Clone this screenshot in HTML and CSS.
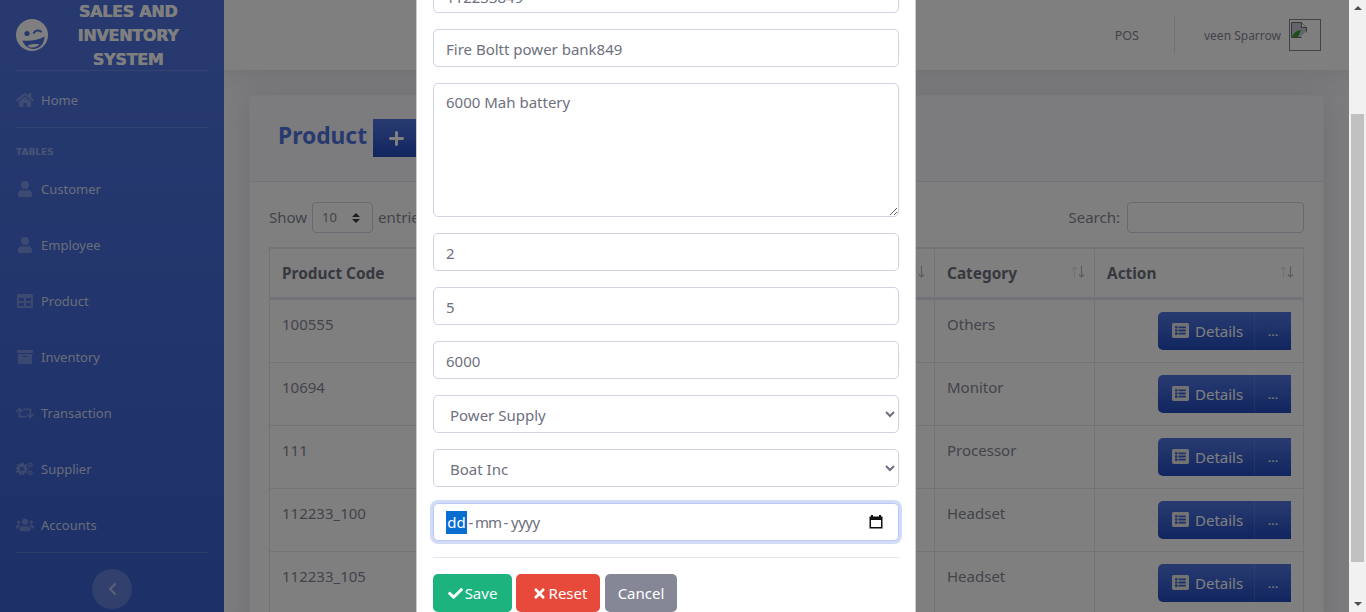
FILE: index.html
```html
<!DOCTYPE html>
<html lang="en">
<head>
    <meta charset="UTF-8">
    <meta name="viewport" content="width=device-width, initial-scale=1.0">
    <title>Product</title>
    <link rel="stylesheet" href="styles.css">
</head>
<body>
    <div id="page">
        <aside id="sidebar">
            <div class="brand">
                <svg class="brand-icon" viewBox="0 0 32 32">
                    <circle cx="16" cy="16" r="16" fill="currentColor"/>
                    <circle cx="11" cy="14.500" r="2.600" fill="#4e73df"/>
                    <path d="M17.500 14.500c1.500-3.500 5.500-4 8-1.500" fill="none" stroke="#4e73df" stroke-width="2"/>
                    <path d="M6.500 21.500c6.500 1 15.500 0 22-4 0 7-4.500 12-10.500 12.500-5.500.4-10-3.500-11.500-8.500z" fill="#4e73df"/>
                    <path d="M11.500 27c3-2 8-2.500 12-1.500-3.500 3.500-8.500 4-12 1.500z" fill="currentColor"/>
                </svg>
                <div class="brand-text">SALES AND INVENTORY SYSTEM</div>
            </div>
            <hr class="side-line">
            <a class="nav-home">
                <svg class="nav-icon" viewBox="0 0 576 512"><path fill="currentColor" d="M280 148 96 300v164c0 9 7 16 16 16l112-.3c9 0 16-7 16-16V368c0-9 7-16 16-16h64c9 0 16 7 16 16v95.600c0 9 7 16 16 16l112 .4c9 0 16-7 16-16V300L296 148c-4-4-12-4-16 0zM572 251l-84-69V44c0-7-5-12-12-12h-56c-7 0-12 5-12 12v72l-90-74c-18-15-43-15-61 0L4 251c-5 4-6 12-2 17l26 31c4 5 12 6 17 2L280 107c4-4 12-4 16 0l235 194c5 4 13 3 17-2l26-31c4-5 3-13-2-17z"/></svg>
                Home
            </a>
            <hr class="side-line">
            <div class="side-head">TABLES</div>
            <a class="nav-item">
                <svg class="nav-icon" viewBox="0 0 448 512"><path fill="currentColor" d="M224 256a128 128 0 1 0 0-256 128 128 0 0 0 0 256zm90 32h-17a174 174 0 0 1-146 0h-17C60 288 0 348 0 422v42c0 26 22 48 48 48h352c26 0 48-22 48-48v-42c0-74-60-134-134-134z"/></svg>
                Customer
            </a>
            <a class="nav-item">
                <svg class="nav-icon" viewBox="0 0 448 512"><path fill="currentColor" d="M224 256a128 128 0 1 0 0-256 128 128 0 0 0 0 256zm90 32h-17a174 174 0 0 1-146 0h-17C60 288 0 348 0 422v42c0 26 22 48 48 48h352c26 0 48-22 48-48v-42c0-74-60-134-134-134z"/></svg>
                Employee
            </a>
            <a class="nav-item">
                <svg class="nav-icon" viewBox="0 0 512 512"><path fill="currentColor" d="M464 32H48C21 32 0 53 0 80v352c0 27 21 48 48 48h416c27 0 48-21 48-48V80c0-27-21-48-48-48zM224 416H64v-96h160v96zm0-160H64v-96h160v96zm224 160H288v-96h160v96zm0-160H288v-96h160v96z"/></svg>
                Product
            </a>
            <a class="nav-item">
                <svg class="nav-icon" viewBox="0 0 512 512"><path fill="currentColor" d="M32 448c0 18 14 32 32 32h384c18 0 32-14 32-32V160H32v288zm160-212c0-7 5-12 12-12h104c7 0 12 5 12 12v8c0 7-5 12-12 12H204c-7 0-12-5-12-12v-8zM480 32H32C14 32 0 46 0 64v48c0 9 7 16 16 16h480c9 0 16-7 16-16V64c0-18-14-32-32-32z"/></svg>
                Inventory
            </a>
            <a class="nav-item">
                <svg class="nav-icon" viewBox="0 0 640 512"><path fill="currentColor" d="M629.657 343.598L528.971 444.284c-9.373 9.372-24.568 9.372-33.941 0L394.343 343.598c-9.373-9.373-9.373-24.569 0-33.941l10.823-10.823c9.562-9.562 25.133-9.34 34.419.492L480 342.118V160H292.451a24.005 24.005 0 0 1-16.971-7.029l-16-16C244.361 121.851 255.069 96 276.451 96H520c13.255 0 24 10.745 24 24v222.118l40.416-42.792c9.285-9.831 24.856-10.054 34.419-.492l10.823 10.823c9.372 9.372 9.372 24.569-.001 33.941zm-265.138 15.431A23.999 23.999 0 0 0 347.548 352H160V169.881l40.416 42.792c9.286 9.831 24.856 10.054 34.419.491l10.822-10.822c9.373-9.373 9.373-24.569 0-33.941L144.971 67.716c-9.373-9.373-24.569-9.373-33.941 0L10.343 168.402c-9.373 9.373-9.373 24.569 0 33.941l10.822 10.822c9.562 9.562 25.133 9.34 34.419-.491L96 169.881V392c0 13.255 10.745 24 24 24h243.549c21.382 0 32.09-25.851 16.971-40.971l-16.001-16z"/></svg>
                Transaction
            </a>
            <a class="nav-item">
                <svg class="nav-icon" viewBox="0 0 640 512">
                    <circle cx="210" cy="256" r="125" fill="none" stroke="currentColor" stroke-width="110"/>
                    <path fill="none" stroke="currentColor" stroke-width="70" stroke-dasharray="70 59" d="M210 60a196 196 0 1 1-.1 0z"/>
                    <circle cx="510" cy="110" r="62" fill="none" stroke="currentColor" stroke-width="50"/>
                    <circle cx="510" cy="400" r="62" fill="none" stroke="currentColor" stroke-width="50"/>
                </svg>
                Supplier
            </a>
            <a class="nav-item">
                <svg class="nav-icon" viewBox="0 0 640 512"><path fill="currentColor" d="M96 224a64 64 0 1 0 0-128 64 64 0 0 0 0 128zm448 0a64 64 0 1 0 0-128 64 64 0 0 0 0 128zm32 32h-64c-18 0-34 7-45 19 40 22 69 62 75 109h66c18 0 32-14 32-32v-32c0-35-29-64-64-64zm-256 0a112 112 0 1 0 0-224 112 112 0 0 0 0 224zm77 32h-8a155 155 0 0 1-138 0h-8C179 288 128 340 128 403v29c0 27 21 48 48 48h288c27 0 48-21 48-48v-29c0-63-51-115-115-115zm-224-13c-11-12-27-19-45-19H64c-35 0-64 29-64 64v32c0 18 14 32 32 32h66c6-47 35-87 75-109z"/></svg>
                Accounts
            </a>
            <hr class="side-line">
            <div class="toggle-wrap">
                <div class="side-toggle">
                    <svg viewBox="0 0 320 512"><path fill="currentColor" d="M34 239 228 45c9-9 24-9 34 0l22 23c9 9 9 24 0 34L130 256l154 154c9 10 9 25 0 34l-22 23c-10 9-25 9-34 0L34 273c-10-9-10-25 0-34z"/></svg>
                </div>
            </div>
        </aside>

        <div id="main">
            <header id="topbar">
                <span class="top-link">POS</span>
                <span class="top-rule"></span>
                <span class="top-name">veen Sparrow</span>
                <span class="avatar">
                    <svg viewBox="0 0 16 16" width="16" height="16">
                        <path d="M.5.5h10l5 5v5l-5 5H.5z" fill="#c6cad6" stroke="#6e6e6e"/>
                        <path d="M10.500.5v5h5" fill="#fff" stroke="#6e6e6e"/>
                        <path d="M1 15c1.500-4 5-7 9-7l-3 7z" fill="#3c9a35"/>
                        <path d="M9 15l6.500-6v6z" fill="#fff"/>
                    </svg>
                </span>
            </header>
            <div id="content">
                <section class="card">
                    <div class="card-head">
                        <h4 class="card-title">Product</h4>
                        <span class="add-btn"><svg viewBox="0 0 15 15" width="15" height="15"><path fill="#fff" d="M6 1.500C6 .7 6.700 0 7.500 0S9 .7 9 1.500V6h4.500c.8 0 1.500.7 1.500 1.500S14.300 9 13.500 9H9v4.500c0 .8-.7 1.500-1.500 1.500S6 14.300 6 13.500V9H1.500C.7 9 0 8.300 0 7.500S.7 6 1.500 6H6z"/></svg></span>
                    </div>
                    <div class="card-body">
                        <div class="table-tools">
                            <div class="show-box">Show <span class="len-select">10 <svg class="len-arrows" viewBox="0 0 8 10"><path fill="#3a3a3a" d="M0 4 4 0l4 4zM0 6h8l-4 4z"/></svg></span> entries</div>
                            <div class="search-box">Search: <span class="search-input"></span></div>
                        </div>
                        <table id="products">
                            <thead>
                                <tr>
                                    <th class="col-code">Product Code</th>
                                    <th class="col-name">Name<svg class="sort" viewBox="0 0 14 12"><path class="sort-up" d="M3.500 12V1M1 3.500 3.500 1 6 3.500"/><path class="sort-down" d="M10.500 0v11M8 8.500l2.500 2.500L13 8.500"/></svg></th>
                                    <th class="col-cat">Category<svg class="sort" viewBox="0 0 14 12"><path class="sort-up" d="M3.500 12V1M1 3.500 3.500 1 6 3.500"/><path class="sort-down" d="M10.500 0v11M8 8.500l2.500 2.500L13 8.500"/></svg></th>
                                    <th class="col-act">Action<svg class="sort" viewBox="0 0 14 12"><path class="sort-up" d="M3.500 12V1M1 3.500 3.500 1 6 3.500"/><path class="sort-down" d="M10.500 0v11M8 8.500l2.500 2.500L13 8.500"/></svg></th>
                                </tr>
                            </thead>
                            <tbody>
                                <tr>
                                    <td>100555</td><td></td><td>Others</td>
                                    <td><div class="act"><span class="act-main"><svg class="list-icon" viewBox="0 0 512 512"><path fill="currentColor" d="M464 480H48c-27 0-48-21-48-48V80c0-27 21-48 48-48h416c27 0 48 21 48 48v352c0 27-21 48-48 48zM128 120a40 40 0 1 0 0 80 40 40 0 0 0 0-80zm0 96a40 40 0 1 0 0 80 40 40 0 0 0 0-80zm0 96a40 40 0 1 0 0 80 40 40 0 0 0 0-80zm288-136v-32c0-7-5-12-12-12H204c-7 0-12 5-12 12v32c0 7 5 12 12 12h200c7 0 12-5 12-12zm0 96v-32c0-7-5-12-12-12H204c-7 0-12 5-12 12v32c0 7 5 12 12 12h200c7 0 12-5 12-12zm0 96v-32c0-7-5-12-12-12H204c-7 0-12 5-12 12v32c0 7 5 12 12 12h200c7 0 12-5 12-12z"/></svg>Details</span><span class="act-more">...</span></div></td>
                                </tr>
                                <tr>
                                    <td>10694</td><td></td><td>Monitor</td>
                                    <td><div class="act"><span class="act-main"><svg class="list-icon" viewBox="0 0 512 512"><path fill="currentColor" d="M464 480H48c-27 0-48-21-48-48V80c0-27 21-48 48-48h416c27 0 48 21 48 48v352c0 27-21 48-48 48zM128 120a40 40 0 1 0 0 80 40 40 0 0 0 0-80zm0 96a40 40 0 1 0 0 80 40 40 0 0 0 0-80zm0 96a40 40 0 1 0 0 80 40 40 0 0 0 0-80zm288-136v-32c0-7-5-12-12-12H204c-7 0-12 5-12 12v32c0 7 5 12 12 12h200c7 0 12-5 12-12zm0 96v-32c0-7-5-12-12-12H204c-7 0-12 5-12 12v32c0 7 5 12 12 12h200c7 0 12-5 12-12zm0 96v-32c0-7-5-12-12-12H204c-7 0-12 5-12 12v32c0 7 5 12 12 12h200c7 0 12-5 12-12z"/></svg>Details</span><span class="act-more">...</span></div></td>
                                </tr>
                                <tr>
                                    <td>111</td><td></td><td>Processor</td>
                                    <td><div class="act"><span class="act-main"><svg class="list-icon" viewBox="0 0 512 512"><path fill="currentColor" d="M464 480H48c-27 0-48-21-48-48V80c0-27 21-48 48-48h416c27 0 48 21 48 48v352c0 27-21 48-48 48zM128 120a40 40 0 1 0 0 80 40 40 0 0 0 0-80zm0 96a40 40 0 1 0 0 80 40 40 0 0 0 0-80zm0 96a40 40 0 1 0 0 80 40 40 0 0 0 0-80zm288-136v-32c0-7-5-12-12-12H204c-7 0-12 5-12 12v32c0 7 5 12 12 12h200c7 0 12-5 12-12zm0 96v-32c0-7-5-12-12-12H204c-7 0-12 5-12 12v32c0 7 5 12 12 12h200c7 0 12-5 12-12zm0 96v-32c0-7-5-12-12-12H204c-7 0-12 5-12 12v32c0 7 5 12 12 12h200c7 0 12-5 12-12z"/></svg>Details</span><span class="act-more">...</span></div></td>
                                </tr>
                                <tr>
                                    <td>112233_100</td><td></td><td>Headset</td>
                                    <td><div class="act"><span class="act-main"><svg class="list-icon" viewBox="0 0 512 512"><path fill="currentColor" d="M464 480H48c-27 0-48-21-48-48V80c0-27 21-48 48-48h416c27 0 48 21 48 48v352c0 27-21 48-48 48zM128 120a40 40 0 1 0 0 80 40 40 0 0 0 0-80zm0 96a40 40 0 1 0 0 80 40 40 0 0 0 0-80zm0 96a40 40 0 1 0 0 80 40 40 0 0 0 0-80zm288-136v-32c0-7-5-12-12-12H204c-7 0-12 5-12 12v32c0 7 5 12 12 12h200c7 0 12-5 12-12zm0 96v-32c0-7-5-12-12-12H204c-7 0-12 5-12 12v32c0 7 5 12 12 12h200c7 0 12-5 12-12zm0 96v-32c0-7-5-12-12-12H204c-7 0-12 5-12 12v32c0 7 5 12 12 12h200c7 0 12-5 12-12z"/></svg>Details</span><span class="act-more">...</span></div></td>
                                </tr>
                                <tr>
                                    <td>112233_105</td><td></td><td>Headset</td>
                                    <td><div class="act"><span class="act-main"><svg class="list-icon" viewBox="0 0 512 512"><path fill="currentColor" d="M464 480H48c-27 0-48-21-48-48V80c0-27 21-48 48-48h416c27 0 48 21 48 48v352c0 27-21 48-48 48zM128 120a40 40 0 1 0 0 80 40 40 0 0 0 0-80zm0 96a40 40 0 1 0 0 80 40 40 0 0 0 0-80zm0 96a40 40 0 1 0 0 80 40 40 0 0 0 0-80zm288-136v-32c0-7-5-12-12-12H204c-7 0-12 5-12 12v32c0 7 5 12 12 12h200c7 0 12-5 12-12zm0 96v-32c0-7-5-12-12-12H204c-7 0-12 5-12 12v32c0 7 5 12 12 12h200c7 0 12-5 12-12zm0 96v-32c0-7-5-12-12-12H204c-7 0-12 5-12 12v32c0 7 5 12 12 12h200c7 0 12-5 12-12z"/></svg>Details</span><span class="act-more">...</span></div></td>
                                </tr>
                            </tbody>
                        </table>
                    </div>
                </section>
            </div>
        </div>
        <div id="scrollbar">
            <span class="bar-btn bar-up"></span>
            <div class="bar-track"><div class="bar-thumb"></div></div>
            <span class="bar-btn bar-down"></span>
        </div>
    </div>

    <div id="backdrop"></div>
    <div id="modal">
        <form class="modal-form">
            <input class="field first-field" type="text" value="112233849">
            <input class="field" type="text" value="Fire Boltt power bank849">
            <textarea class="field area">6000 Mah battery</textarea>
            <input class="field" type="text" value="2">
            <input class="field" type="text" value="5">
            <input class="field" type="text" value="6000">
            <select class="field pick"><option>Power Supply</option></select>
            <select class="field pick"><option>Boat Inc</option></select>
            <div class="field date-field">
                <span class="date-text"><span class="date-sel">dd</span><span class="date-dash">-</span><span class="date-mm">mm</span><span class="date-dash">-</span><span class="date-yy">yyyy</span></span>
                <svg class="cal-icon" viewBox="0 0 16 16"><path fill="#111" d="M3 1h2v1.500h6V1h2v1.500h1.500v12h-13v-12H3zM3 6v7h10V6z"/></svg>
            </div>
            <hr class="modal-line">
            <div class="modal-btns">
                <span class="btn btn-save"><svg class="btn-icon" viewBox="0 0 512 512"><path fill="currentColor" d="M174 439 7 273c-10-10-10-26 0-36l36-36c10-10 26-10 36 0l113 112L433 73c10-10 26-10 36 0l36 36c10 10 10 26 0 36L210 439c-10 10-26 10-36 0z"/></svg>Save</span>
                <span class="btn btn-reset"><svg class="btn-icon" viewBox="0 0 352 512"><path fill="currentColor" d="M243 256 343 156c12-12 12-32 0-44l-22-22c-12-12-32-12-44 0L176 189 76 89c-12-12-32-12-44 0L9 111c-12 12-12 32 0 44l100 101L9 356c-12 12-12 32 0 44l22 23c12 12 32 12 44 0l101-101 100 101c12 12 32 12 44 0l23-23c12-12 12-32 0-44z"/></svg>Reset</span>
                <span class="btn btn-cancel">Cancel</span>
            </div>
        </form>
    </div>
</body>
</html>
```

FILE: styles.css
```css
*{
    box-sizing: border-box;
    margin: 0;
    padding: 0;
}
html, body{
    height: 612px;
    overflow: hidden;
}
body{
    font-family: "Noto Sans", "Open Sans", sans-serif;
    font-size: 16px;
    color: #858796;
    background: #f8f9fc;
}
#page{
    display: flex;
    height: 612px;
    overflow: hidden;
}

/* sidebar */
#sidebar{
    flex: 0 0 224px;
    height: 612px;
    padding: 0 16px;
    color: #fff;
    background: linear-gradient(180deg, #4e73df 10%, #3a60d0 100%);
}
.brand{
    display: flex;
    align-items: center;
    height: 70px;
}
.brand-icon{
    flex: 0 0 32px;
    width: 32px;
    height: 32px;
}
.brand-text{
    flex: 1;
    padding: 2px 8px 0;
    font-family: "DejaVu Sans", sans-serif;
    font-size: 16px;
    font-weight: 800;
    line-height: 24px;
    letter-spacing: -.3px;
    text-align: center;
    text-shadow: .4px 0 currentColor;
}
.side-line{
    height: 1px;
    border: 0;
    background: rgba(255,255,255,.15);
}
.nav-home, .nav-item{
    display: flex;
    align-items: center;
    gap: 7px;
    height: 56px;
    padding-top: 2px;
    font-size: 13px;
    color: rgba(255,255,255,.75);
}
.nav-icon{
    flex: 0 0 18px;
    width: 18px;
    height: 16px;
    color: rgba(255,255,255,.27);
}
.side-head{
    height: 32px;
    padding-top: 17px;
    font-family: "DejaVu Sans", sans-serif;
    font-size: 9px;
    font-weight: 800;
    line-height: 14px;
    color: rgba(255,255,255,.4);
}
.toggle-wrap{
    display: flex;
    justify-content: center;
    padding-top: 16px;
}
.side-toggle{
    display: flex;
    align-items: center;
    justify-content: center;
    width: 40px;
    height: 40px;
    border-radius: 50%;
    color: rgba(255,255,255,.5);
    background: rgba(255,255,255,.2);
}
.side-toggle svg{
    width: 9px;
    height: 14px;
}

/* main column */
#main{
    flex: 1;
    min-width: 0;
    height: 612px;
    overflow: hidden;
}
#topbar{
    display: flex;
    align-items: center;
    justify-content: flex-end;
    height: 70px;
    padding-right: 28px;
    font-size: 12.5px;
    background: #fff;
    box-shadow: 0 2px 28px rgba(58,59,69,.15);
    position: relative;
}
.top-link{
    margin-right: 35px;
}
.top-rule{
    width: 1px;
    height: 38px;
    margin-right: 29px;
    background: #e3e6f0;
}
.top-name{
    margin-right: 8px;
    font-size: 12px;
}
.avatar{
    display: block;
    width: 32px;
    height: 32px;
    border: 1px solid #858796;
    padding: 2px 0 0 1px;
}
.avatar svg{
    display: block;
}
#content{
    padding: 25px 25px 0;
}
.card{
    border: 1px solid #f4f5f9;
    border-radius: 5px;
    background: #fff;
    box-shadow: 0 2px 28px rgba(58,59,69,.15);
}
.card-head{
    display: flex;
    align-items: center;
    height: 86px;
    padding: 0 28px 1px;
    border-bottom: 1px solid #e3e6f0;
    background: #f8f9fc;
}
.card-title{
    margin-bottom: 5px;
    font-size: 22.8px;
    font-weight: 700;
    color: #4e73df;
}
.add-btn{
    display: flex;
    align-items: center;
    justify-content: center;
    width: 46px;
    height: 38px;
    margin-left: 6px;
    background: linear-gradient(180deg, #4e73df 10%, #224abe 100%);
}
.card-body{
    padding: 20px 19px;
}
.table-tools{
    display: flex;
    justify-content: space-between;
    height: 45px;
}
.show-box, .search-box{
    display: flex;
    align-items: center;
    gap: 5px;
    height: 31px;
    font-size: 15px;
    line-height: 29px;
}
.len-select{
    display: flex;
    align-items: center;
    justify-content: space-between;
    width: 61px;
    height: 31px;
    padding: 0 12px 0 9px;
    border: 1px solid #d1d3e2;
    border-radius: 4px;
    font-size: 13px;
}
.len-arrows{
    display: block;
    width: 8px;
    height: 10px;
}
.search-input{
    display: block;
    width: 177px;
    height: 31px;
    margin-left: 2px;
    border: 1px solid #d1d3e2;
    border-radius: 4px;
    background: #fff;
}
#products{
    width: 1035px;
    table-layout: fixed;
    border-collapse: collapse;
    border-top: 2px solid #e3e6f0;
    border-right: 1px solid #e3e6f0;
    border-left: 1px solid #e3e6f0;
    font-size: 15px;
}
#products th{
    position: relative;
    height: 50px;
    padding: 2px 12px 0;
    border: 1px solid #e3e6f0;
    border-bottom: 3px solid #e3e6f0;
    text-align: left;
    font-size: 15.4px;
    font-weight: 700;
    color: #6e707e;
}
#products td{
    height: 63px;
    padding: 13px 12px 0;
    border: 1px solid #e3e6f0;
    vertical-align: top;
    line-height: 22px;
}
#products tbody tr:first-child td{
    height: 64px;
}
.col-code{
    width: 300px;
}
.col-cat{
    width: 160px;
}
.col-act{
    width: 209px;
}
.sort{
    position: absolute;
    top: 17px;
    right: 9px;
    width: 14px;
    height: 12px;
    fill: none;
    stroke-width: 1.2;
}
.sort-up{
    stroke: #e2e3ea;
}
.sort-down{
    stroke: #b5b6c0;
}
.act{
    display: flex;
    justify-content: flex-end;
    margin-top: -1px;
}
.act-main, .act-more{
    display: flex;
    align-items: center;
    height: 38px;
    color: #fff;
    background: linear-gradient(180deg, #4e73df 10%, #224abe 100%);
}
.act-main{
    width: 97px;
    padding-left: 14px;
    border-radius: 5px 0 0 5px;
    border-right: 1px solid rgba(255,255,255,.1);
    font-size: 15px;
}
.act-more{
    justify-content: center;
    width: 36px;
    font-size: 13px;
}
.list-icon{
    width: 17px;
    height: 17px;
    margin-right: 6px;
    color: #e6e6e6;
}

/* fake scrollbar */
#scrollbar{
    flex: 0 0 17px;
    display: flex;
    flex-direction: column;
    height: 612px;
    background: #f1f1f1;
}
.bar-btn{
    display: block;
    flex: 0 0 17px;
    position: relative;
}
.bar-btn::after{
    content: "";
    position: absolute;
    left: 5px;
    width: 0;
    height: 0;
    border-left: 4px solid transparent;
    border-right: 4px solid transparent;
}
.bar-up::after{
    top: 6px;
    border-bottom: 4px solid #505050;
}
.bar-down::after{
    top: 7px;
    border-top: 4px solid #505050;
}
.bar-track{
    flex: 1;
    padding-top: 97px;
}
.bar-thumb{
    width: 13px;
    height: 448px;
    margin: 0 2px;
    background: #c1c1c1;
}

/* modal on top */
#backdrop{
    position: fixed;
    top: 0;
    right: 17px;
    bottom: 0;
    left: 0;
    background: rgba(0,0,0,.5);
}
#modal{
    position: fixed;
    top: 0;
    left: 416px;
    width: 500px;
    height: 612px;
    overflow: hidden;
    border-left: 1px solid rgba(0,0,0,.2);
    border-right: 1px solid rgba(0,0,0,.2);
    background: #fff;
}
.modal-form{
    display: flex;
    flex-direction: column;
    gap: 16px;
    padding: 0 16px;
}
.field{
    display: block;
    width: 466px;
    height: 38px;
    padding: 7px 12px 5px;
    border: 1px solid #d1d3e2;
    border-radius: 5px;
    font-family: "Noto Sans", "Open Sans", sans-serif;
    font-size: 15px;
    color: #6e707e;
    background: #fff;
}
.first-field{
    margin-top: -25px;
    padding: 11px 12px 5px;
}
.area{
    height: 134px;
    padding-top: 6px;
    line-height: 24px;
}
.date-field{
    display: flex;
    align-items: center;
    justify-content: space-between;
    padding: 6px 12px;
    border-color: #bac8f3;
    box-shadow: 0 0 0 3px rgba(78,115,223,.25);
}
.date-text{
    display: flex;
    align-items: center;
    color: #6e707e;
}
.date-sel{
    width: 21px;
    height: 23px;
    line-height: 23px;
    text-align: center;
    color: #fff;
    background: #0a6ed1;
}
.date-dash{
    width: 8px;
    text-align: center;
}
.date-mm{
    width: 27px;
    letter-spacing: -1px;
}
.date-yy{
    letter-spacing: -.5px;
    margin-left: 1px;
}
.cal-icon{
    width: 16px;
    height: 16px;
    margin-right: 2px;
}
.modal-line{
    height: 1px;
    border: 0;
    background: #e3e6f0;
}
.modal-btns{
    display: flex;
    gap: 4px;
}
.btn{
    display: flex;
    align-items: center;
    justify-content: center;
    height: 38px;
    border-radius: 5px;
    font-size: 15px;
    color: #fff;
}
.btn-icon{
    width: 15px;
    height: 15px;
    margin-right: 2px;
}
.btn-save{
    width: 79px;
    background: #1cb37e;
}
.btn-reset{
    width: 84px;
    padding-left: 3px;
    background: #e74a3b;
}
.btn-cancel{
    width: 72px;
    margin-left: 1px;
    background: #858796;
}
```
